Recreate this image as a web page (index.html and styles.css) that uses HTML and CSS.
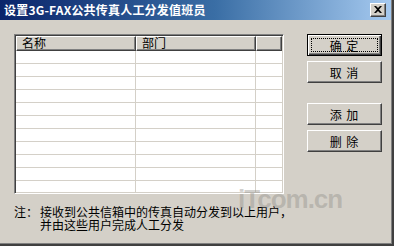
FILE: index.html
```html
<!DOCTYPE html>
<html>
<head>
<meta charset="utf-8">
<link rel="stylesheet" href="styles.css">
</head>
<body>
<div class="window">
  <div class="titlebar">
    <span class="title">设置3G-FAX公共传真人工分发值班员</span>
    <span class="close"><svg width="8" height="7" viewBox="0 0 8 7"><path d="M0 0h2l2 2 2-2h2L5 3.5 8 7H6L4 5 2 7H0l3-3.5z" fill="#000"/></svg></span>
  </div>
  <div class="content">
    <div class="left">
      <div class="list">
        <div class="head">
          <div class="hcell c1">名称</div>
          <div class="hcell c2">部门</div>
          <div class="hcell c3"></div>
        </div>
        <div class="rows">
          <div class="row"><div class="cell c1"></div><div class="cell c2"></div><div class="cell c3"></div></div>
          <div class="row"><div class="cell c1"></div><div class="cell c2"></div><div class="cell c3"></div></div>
          <div class="row"><div class="cell c1"></div><div class="cell c2"></div><div class="cell c3"></div></div>
          <div class="row"><div class="cell c1"></div><div class="cell c2"></div><div class="cell c3"></div></div>
          <div class="row"><div class="cell c1"></div><div class="cell c2"></div><div class="cell c3"></div></div>
          <div class="row"><div class="cell c1"></div><div class="cell c2"></div><div class="cell c3"></div></div>
          <div class="row"><div class="cell c1"></div><div class="cell c2"></div><div class="cell c3"></div></div>
          <div class="row"><div class="cell c1"></div><div class="cell c2"></div><div class="cell c3"></div></div>
          <div class="row"><div class="cell c1"></div><div class="cell c2"></div><div class="cell c3"></div></div>
          <div class="row"><div class="cell c1"></div><div class="cell c2"></div><div class="cell c3"></div></div>
          <div class="row last"><div class="cell c1"></div><div class="cell c2"></div><div class="cell c3"></div></div>
        </div>
      </div>
      <div class="note">
        <div class="line"><span class="label">注：</span>接收到公共信箱中的传真自动分发到以上用户，</div>
        <div class="line indent">并由这些用户完成人工分发</div>
      </div>
    </div>
    <div class="buttons">
      <div class="btn default"><span class="focus">确&nbsp;定</span></div>
      <div class="btn">取&nbsp;消</div>
      <div class="btn gap">添&nbsp;加</div>
      <div class="btn">删&nbsp;除</div>
    </div>
  </div>
  <div class="watermark">iTcom.cn</div>
</div>
</body>
</html>
```

FILE: styles.css
```css
* { box-sizing: border-box; }
html, body { margin: 0; padding: 0; background: #d4d0c8; }
body { width: 394px; height: 246px; overflow: hidden; font-family: "Noto Sans CJK SC", "Noto Sans", sans-serif; }

.window {
  position: relative;
  width: 394px;
  height: 246px;
  background: #d4d0c8;
  border-right: 2px solid #404040;
  border-bottom: 2px solid #404040;
  box-shadow: inset -1px -1px 0 #808080;
  display: flex;
  flex-direction: column;
}

.titlebar {
  height: 20px;
  flex: none;
  margin-right: 1px;
  background: linear-gradient(to right, #0a246a 0%, #3a6ea5 55%, #a6caf0 100%);
  display: flex;
  align-items: center;
  justify-content: space-between;
  padding: 0 5px 0 4px;
}
.title {
  color: #fff;
  font-size: 12px;
  font-weight: bold;
  line-height: 14px;
  letter-spacing: 0.2px;
}
.close {
  width: 16px;
  height: 14px;
  background: #d4d0c8;
  border-top: 1px solid #fff;
  border-left: 1px solid #fff;
  border-right: 1px solid #404040;
  border-bottom: 1px solid #404040;
  box-shadow: inset -1px -1px 0 #808080;
  display: flex;
  align-items: center;
  justify-content: center;
  padding-bottom: 1px;
}

.content {
  flex: 1;
  display: flex;
  padding: 14px 0 0 14px;
}
.left { width: 270px; display: flex; flex-direction: column; }

.list {
  width: 270px;
  height: 160px;
  background: #fff;
  border-top: 1px solid #808080;
  border-left: 1px solid #808080;
  border-right: 1px solid #fff;
  border-bottom: 1px solid #fff;
  box-shadow: inset 1px 1px 0 #404040, inset -1px -1px 0 #d4d0c8;
  padding: 1px;
  overflow: hidden;
}
.head { display: flex; height: 15px; }
.hcell {
  background: #d4d0c8;
  border-top: 1px solid #fff;
  border-left: 1px solid #fff;
  border-right: 1px solid #404040;
  border-bottom: 1px solid #404040;
  box-shadow: inset -1px -1px 0 #808080;
  font-size: 12px;
  line-height: 12px;
  padding-left: 5px;
  color: #000;
}
.c1 { width: 120px; }
.c2 { width: 120px; }
.c3 { width: 26px; }
.row { display: flex; height: 13px; border-bottom: 1px solid #d4d0c8; }
.cell { border-right: 1px solid #d4d0c8; height: 12px; }
.cell.c3 { border-right: none; }

.note {
  margin-top: 11px;
  font-size: 12px;
  line-height: 13px;
  color: #000;
  white-space: nowrap;
}
.label { display: inline-block; width: 26px; }
.indent { padding-left: 26px; }

.buttons {
  display: flex;
  flex-direction: column;
  margin-left: 23px;
  gap: 5px;
  padding-top: 0;
}
.btn {
  width: 75px;
  height: 22px;
  background: #d4d0c8;
  border-top: 1px solid #fff;
  border-left: 1px solid #fff;
  border-right: 1px solid #404040;
  border-bottom: 1px solid #404040;
  box-shadow: inset -1px -1px 0 #808080;
  font-size: 12px;
  color: #000;
  display: flex;
  align-items: center;
  justify-content: center;
  letter-spacing: 1px;
}
.btn.gap { margin-top: 15px; }
.btn.default {
  border: 1px solid #000;
  box-shadow: inset 1px 1px 0 #fff, inset -1px -1px 0 #404040, inset -2px -2px 0 #808080;
  padding: 3px;
}
.focus {
  width: 100%;
  height: 100%;
  border: 1px dotted #000;
  display: flex;
  align-items: center;
  justify-content: center;
}

.watermark {
  position: absolute;
  left: 238px;
  top: 184px;
  font-family: "Liberation Sans", Arial, sans-serif;
  font-weight: bold;
  font-size: 26px;
  letter-spacing: -1px;
  color: rgba(150, 148, 142, 0.45);
  pointer-events: none;
}
```
